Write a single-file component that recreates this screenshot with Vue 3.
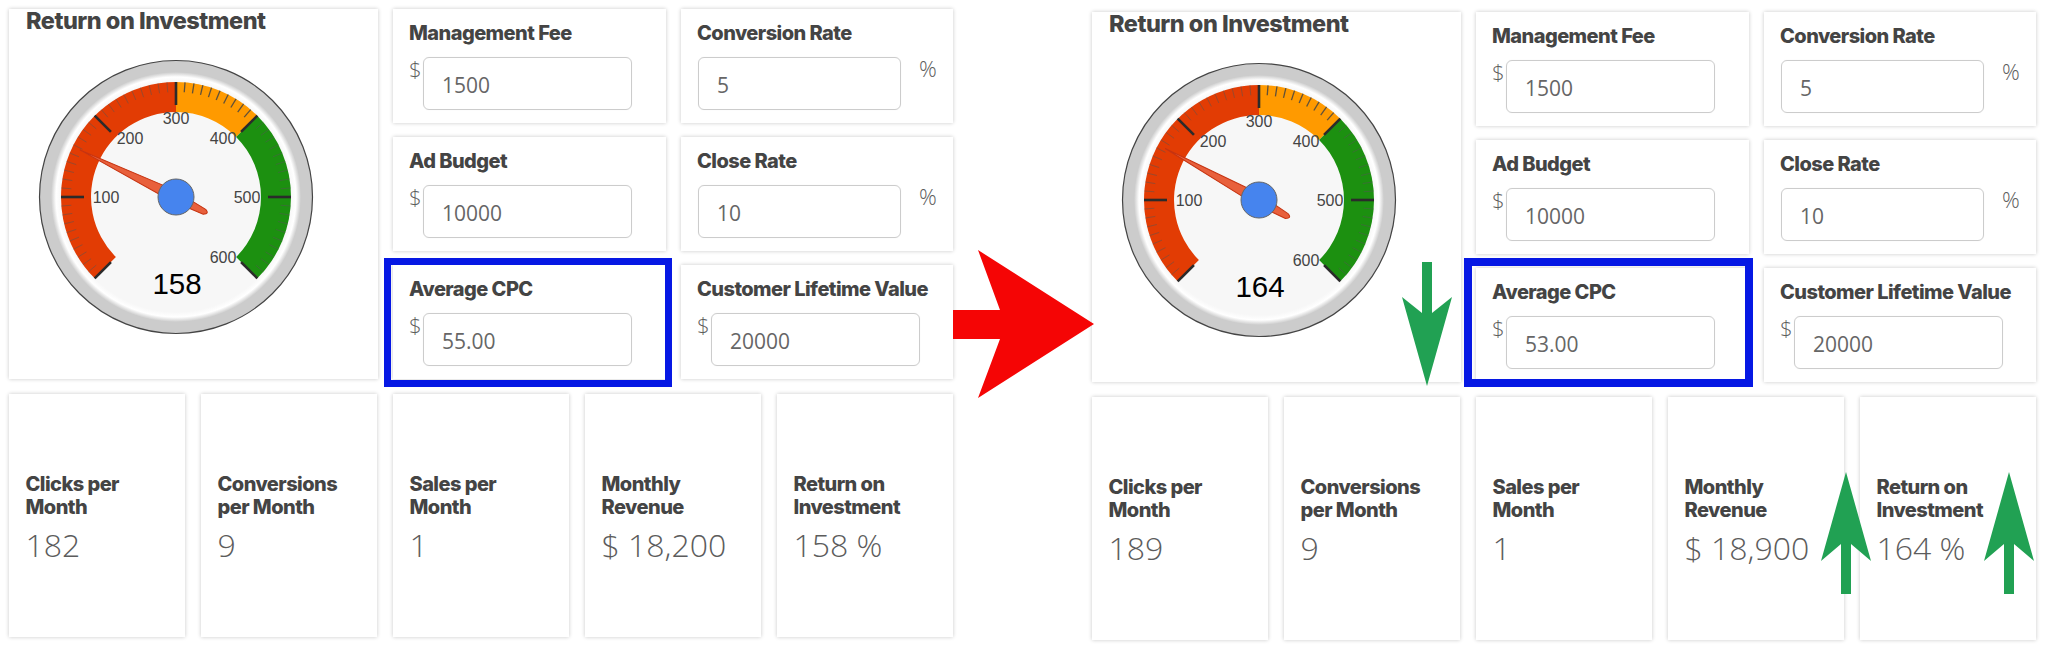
<script setup>
const ANG = 0.45
const polar = (r, a) => {
  const t = ((a - 90) * Math.PI) / 180
  return [(140 + r * Math.cos(t)).toFixed(2), (140 + r * Math.sin(t)).toFixed(2)]
}
const toAngle = (v) => -135 + v * ANG
const band = (from, to) => {
  const a = toAngle(from)
  const b = toAngle(to)
  const large = b - a > 180 ? 1 : 0
  const p1 = polar(115, a)
  const p2 = polar(115, b)
  const p3 = polar(85, b)
  const p4 = polar(85, a)
  return `M${p1} A115 115 0 ${large} 1 ${p2} L${p3} A85 85 0 ${large} 0 ${p4} Z`
}
const bands = [
  { d: band(0, 300), c: '#e23c04' },
  { d: band(300, 400), c: '#ff9a00' },
  { d: band(400, 600), c: '#1c9010' }
]
const minor = []
for (let v = 0; v <= 600; v += 10) {
  if (v % 100 !== 0) {
    const [x1, y1] = polar(115, toAngle(v))
    const [x2, y2] = polar(105, toAngle(v))
    minor.push({ v, x1, y1, x2, y2, c: v > 300 && v < 400 ? 'minor strong' : 'minor' })
  }
}
const major = [0, 100, 200, 300, 400, 500, 600].map((v) => {
  const [x1, y1] = polar(115, toAngle(v))
  const [x2, y2] = polar(92, toAngle(v))
  return { v, x1, y1, x2, y2 }
})
const scale = [
  { t: '100', x: 70, y: 140 },
  { t: '200', x: 94, y: 81 },
  { t: '300', x: 140, y: 61 },
  { t: '400', x: 187, y: 81 },
  { t: '500', x: 211, y: 140 },
  { t: '600', x: 187, y: 200 }
]
const panels = [
  { gauge: 158, cpc: '55.00', clicks: '182', conv: '9', sales: '1', rev: '$ 18,200', roi: '158 %', cls: 'first' },
  { gauge: 164, cpc: '53.00', clicks: '189', conv: '9', sales: '1', rev: '$ 18,900', roi: '164 %', cls: 'second' }
]
const inputs = (p) => [
  { label: 'Management Fee', pre: '$', value: '1500' },
  { label: 'Conversion Rate', post: '%', value: '5' },
  { label: 'Ad Budget', pre: '$', value: '10000' },
  { label: 'Close Rate', post: '%', value: '10' },
  { label: 'Average CPC', pre: '$', value: p.cpc, hl: true },
  { label: 'Customer Lifetime Value', pre: '$', value: '20000' }
]
const stats = (p) => [
  { label: 'Clicks per\nMonth', value: p.clicks },
  { label: 'Conversions\nper Month', value: p.conv },
  { label: 'Sales per\nMonth', value: p.sales },
  { label: 'Monthly\nRevenue', value: p.rev },
  { label: 'Return on\nInvestment', value: p.roi }
]
const up = (x) =>
  `${x},472 ${x + 25},561 ${x + 5},544 ${x + 5},594 ${x - 5},594 ${x - 5},544 ${x - 25},561`
</script>

<template>
  <div class="page">
    <section v-for="p in panels" :key="p.gauge" class="panel" :class="p.cls">
      <div class="top">
        <div class="card gauge-card">
          <h2 class="title">Return on Investment</h2>
          <svg class="gauge" width="280" height="280" viewBox="0 0 280 280">
            <defs>
              <radialGradient :id="'face' + p.gauge">
                <stop offset="0.92" stop-color="#f7f7f7" />
                <stop offset="0.96" stop-color="#ffffff" />
                <stop offset="1" stop-color="#cccccc" />
              </radialGradient>
            </defs>
            <circle cx="140" cy="140" r="136.5" fill="#cccccc" stroke="#444444" stroke-width="1.2" />
            <circle cx="140" cy="140" r="125" :fill="'url(#face' + p.gauge + ')'" />
            <path v-for="b in bands" :key="b.c" :d="b.d" :fill="b.c" />
            <line v-for="t in minor" :key="t.v" :x1="t.x1" :y1="t.y1" :x2="t.x2" :y2="t.y2" :class="t.c" />
            <line v-for="t in major" :key="t.v" :x1="t.x1" :y1="t.y1" :x2="t.x2" :y2="t.y2" class="major" />
            <text v-for="s in scale" :key="s.t" :x="s.x" :y="s.y + 5.5" class="scale">{{ s.t }}</text>
            <text x="141" y="237" class="reading">{{ p.gauge }}</text>
            <path
              class="needle"
              :transform="`rotate(${toAngle(p.gauge)} 140 140)`"
              d="M140 33 L134.5 135 L136.5 172 Q140 178 142 172 L145.5 135 Z"
            />
            <circle cx="140" cy="140" r="18" fill="#4684ee" stroke="#666666" stroke-width="1" />
          </svg>
        </div>
        <div v-for="f in inputs(p)" :key="f.label" class="card input-card" :class="{ hl: f.hl }">
          <div class="label">{{ f.label }}</div>
          <div class="row">
            <span v-if="f.pre" class="affix pre">{{ f.pre }}</span>
            <div class="field" :class="{ short: f.post }">{{ f.value }}</div>
            <span v-if="f.post" class="affix post">{{ f.post }}</span>
          </div>
        </div>
      </div>
      <div class="bottom">
        <div v-for="s in stats(p)" :key="s.label" class="card stat">
          <div class="label multi">{{ s.label }}</div>
          <div class="value">{{ s.value }}</div>
        </div>
      </div>
    </section>
    <svg class="overlay" width="2048" height="649" viewBox="0 0 2048 649">
      <polygon points="953,310 1000,310 978,250 1094,324 978,398 1000,339 953,339" fill="#f50505" />
      <polygon points="1422,262 1432,262 1432,313 1452,297 1427,386 1402,297 1422,313" fill="#21a153" />
      <polygon :points="up(1846)" fill="#21a153" />
      <polygon :points="up(2009)" fill="#21a153" />
    </svg>
  </div>
</template>

<style scoped>
.page {
  position: relative;
  width: 2048px;
  height: 649px;
  overflow: hidden;
  background: #fff;
  display: flex;
  gap: 139px;
  padding: 9px 0 0 9px;
  box-sizing: border-box;
}
.panel {
  width: 944px;
  flex: none;
}
.panel.second {
  margin-top: 3px;
}
.top {
  display: grid;
  grid-template-columns: 369px 273px 272px;
  grid-template-rows: repeat(3, 114px);
  column-gap: 15px;
  row-gap: 14px;
}
.card {
  position: relative;
  background: #fff;
  box-shadow: 0 0 4px rgba(0, 0, 0, 0.22);
  box-sizing: border-box;
}
.gauge-card {
  grid-row: 1 / span 3;
}
.title {
  margin: 0;
  padding-left: 17px;
  font: 800 23.5px/24px Inter, "Liberation Sans", sans-serif;
  letter-spacing: -0.5px;
  color: #444;
}
.gauge {
  display: block;
  margin: 24px 0 0 27px;
}
.minor {
  stroke: #555;
  stroke-width: 1;
  opacity: 0.5;
}
.minor.strong {
  stroke: #444;
  stroke-width: 1.3;
  opacity: 0.85;
}
.major {
  stroke: #2b2b2b;
  stroke-width: 2.6;
}
.scale {
  font: 16px "Liberation Sans", Arial, sans-serif;
  fill: #444;
  text-anchor: middle;
}
.reading {
  font: 29.5px "Liberation Sans", Arial, sans-serif;
  fill: #000;
  text-anchor: middle;
}
.needle {
  fill: #e8603c;
  stroke: #c63310;
  stroke-width: 1;
}
.input-card {
  padding: 13px 0 0 16px;
}
.input-card.hl {
  z-index: 2;
}
.input-card.hl::after {
  content: "";
  position: absolute;
  inset: -7px -6px -8px -9px;
  border: 7px solid #0618e4;
}
.second .input-card.hl::after {
  inset: -10px -4px -5px -12px;
  border-width: 8px;
}
.label {
  font: 800 20px/23px Inter, "Liberation Sans", sans-serif;
  letter-spacing: -0.55px;
  color: #444;
  white-space: nowrap;
}
.row {
  display: flex;
  align-items: flex-start;
  margin-top: 12px;
}
.affix {
  font: 300 22px/22px "Open Sans", sans-serif;
  color: #5e5e5e;
}
.pre {
  width: 14px;
  flex: none;
}
.post {
  margin-left: 18px;
}
.field {
  width: 209px;
  height: 53px;
  box-sizing: border-box;
  padding: 4px 0 0 18px;
  border: 1.5px solid #ccc;
  border-radius: 6px;
  font: 400 21px/47px "Open Sans", sans-serif;
  color: #666;
  box-shadow: 0 0 1px rgba(0, 0, 0, 0.1);
}
.field.short {
  width: 203px;
  margin-left: 1px;
}
.bottom {
  display: grid;
  grid-template-columns: repeat(5, 1fr);
  column-gap: 16px;
  margin-top: 15px;
}
.stat {
  height: 243px;
  padding: 7px 0 0 16.5px;
  display: flex;
  flex-direction: column;
  justify-content: center;
}
.multi {
  white-space: pre-line;
}
.value {
  margin-top: 6px;
  font: 300 32px/40px "Open Sans", sans-serif;
  color: #5c5c5c;
  white-space: nowrap;
}
.overlay {
  position: absolute;
  left: 0;
  top: 0;
  z-index: 3;
  pointer-events: none;
}
</style>
